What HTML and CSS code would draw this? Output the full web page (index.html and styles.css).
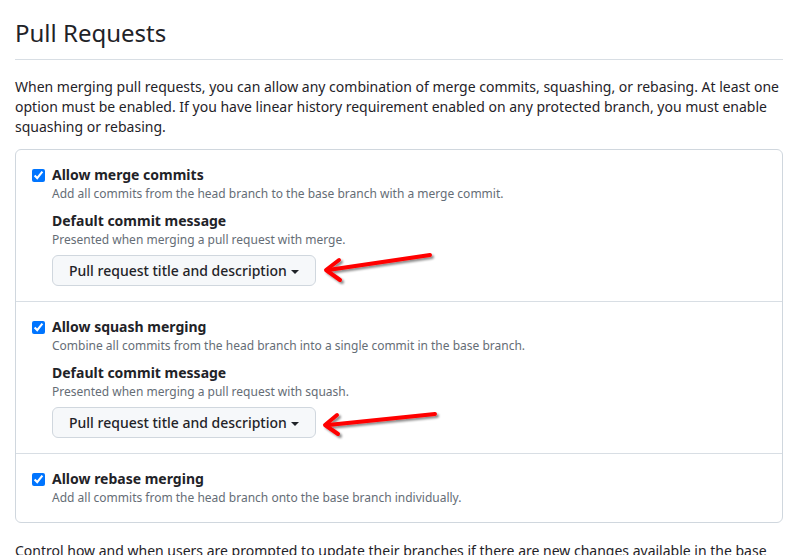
FILE: index.html
```html
<!DOCTYPE html>
<html lang="en">
<head>
<meta charset="utf-8">
<title>Pull Requests</title>
<link rel="stylesheet" href="styles.css">
</head>
<body>
<main class="page">
  <h2 class="subhead">Pull Requests</h2>
  <p class="intro">When merging pull requests, you can allow any combination of merge commits, squashing, or rebasing. At least one option must be enabled. If you have linear history requirement enabled on any protected branch, you must enable squashing or rebasing.</p>

  <div class="box">
    <div class="box-row">
      <label class="check">
        <input type="checkbox" class="cb" checked>
        <span class="check-body">
          <span class="check-title">Allow merge commits</span>
          <span class="note">Add all commits from the head branch to the base branch with a merge commit.</span>
        </span>
      </label>
      <div class="sub">
        <div class="sub-title">Default commit message</div>
        <div class="note">Presented when merging a pull request with merge.</div>
        <button class="btn" type="button">Pull request title and description <span class="caret"></span></button>
      </div>
    </div>
    <div class="box-row">
      <label class="check">
        <input type="checkbox" class="cb" checked>
        <span class="check-body">
          <span class="check-title">Allow squash merging</span>
          <span class="note">Combine all commits from the head branch into a single commit in the base branch.</span>
        </span>
      </label>
      <div class="sub">
        <div class="sub-title">Default commit message</div>
        <div class="note">Presented when merging a pull request with squash.</div>
        <button class="btn" type="button">Pull request title and description <span class="caret"></span></button>
      </div>
    </div>
    <div class="box-row">
      <label class="check">
        <input type="checkbox" class="cb" checked>
        <span class="check-body">
          <span class="check-title">Allow rebase merging</span>
          <span class="note">Add all commits from the head branch onto the base branch individually.</span>
        </span>
      </label>
    </div>
  </div>

  <p class="outro">Control how and when users are prompted to update their branches if there are new changes available in the base branch.</p>
</main>

<svg class="annot" width="808" height="555" viewBox="0 0 808 555" aria-hidden="true">
  <defs>
    <filter id="sh" x="-20%" y="-50%" width="140%" height="200%">
      <feDropShadow dx="2" dy="2" stdDeviation="1.2" flood-color="#000" flood-opacity="0.45"/>
    </filter>
  </defs>
  <g class="arrow" filter="url(#sh)">
    <path d="M430 255 L328 270"/>
    <path d="M339 260 L326 270 L340 280"/>
  </g>
  <g class="arrow" filter="url(#sh)">
    <path d="M435 414 L328 425"/>
    <path d="M337 415 L325 425 L338 434"/>
  </g>
</svg>
</body>
</html>
```

FILE: styles.css
```css
* { box-sizing: border-box; }

html, body {
  margin: 0;
  padding: 0;
  background: #ffffff;
}

body {
  font-family: "Noto Sans", "Open Sans", sans-serif;
  color: #1f2328;
  font-size: 14px;
  line-height: 20px;
  position: relative;
  overflow: hidden;
  height: 555px;
}

.page {
  width: 768px;
  margin-left: 15px;
  padding-top: 15px;
}

.subhead {
  margin: 0;
  font-size: 24px;
  font-weight: 400;
  line-height: 36px;
  padding-bottom: 8px;
  border-bottom: 1px solid #d8dee4;
}

.intro {
  margin: 17px 0 0;
  line-height: 20px;
}

.box {
  margin-top: 12px;
  border: 1px solid #d0d7de;
  border-radius: 6px;
}

.box-row {
  padding: 15px 16px;
}

.box-row + .box-row {
  border-top: 1px solid #d8dee4;
}

.check {
  display: flex;
  align-items: flex-start;
  gap: 7px;
}

.cb {
  margin: 4px 0 0;
  width: 13px;
  height: 13px;
  flex: none;
}

.check-body {
  display: flex;
  flex-direction: column;
}

.check-title,
.sub-title {
  font-weight: 700;
  line-height: 20px;
}

.note {
  font-size: 12px;
  line-height: 18px;
  color: #656d76;
}

.sub {
  margin: 8px 0 0 20px;
  display: flex;
  flex-direction: column;
  align-items: flex-start;
}

.btn {
  margin-top: 6px;
  height: 31px;
  padding: 0 16px;
  display: inline-flex;
  align-items: center;
  gap: 4px;
  font-family: inherit;
  font-size: 14px;
  font-weight: 500;
  color: #1f2328;
  background: #f6f8fa;
  border: 1px solid #d0d7de;
  border-radius: 6px;
}

.caret {
  display: inline-block;
  width: 0;
  height: 0;
  border-top: 4px solid #1f2328;
  border-left: 4px solid transparent;
  border-right: 4px solid transparent;
  margin-top: 2px;
}

.outro {
  margin: 18px 0 0;
  line-height: 20px;
}

.annot {
  position: absolute;
  left: 0;
  top: 0;
  pointer-events: none;
}

.arrow path {
  fill: none;
  stroke: #ff0000;
  stroke-width: 4;
  stroke-linecap: round;
  stroke-linejoin: round;
}
```
